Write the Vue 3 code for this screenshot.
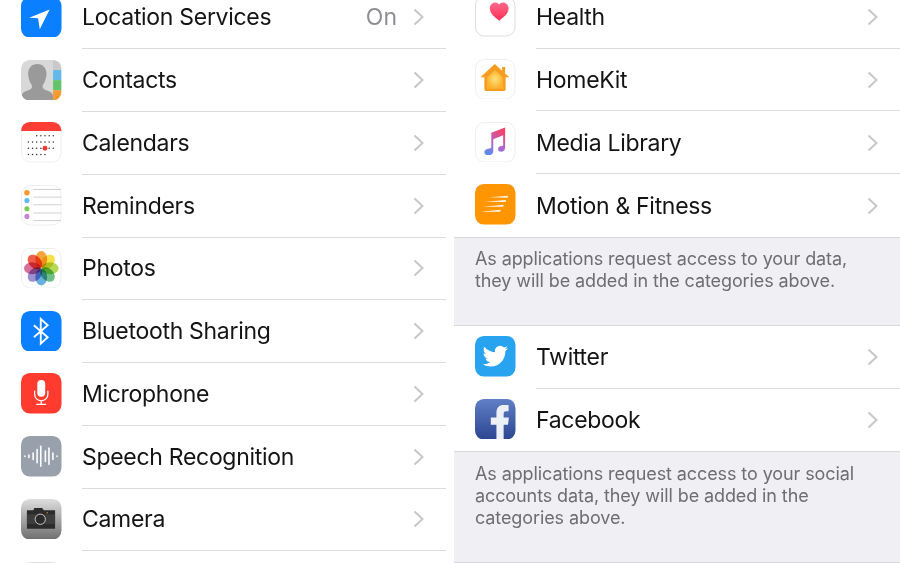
<script setup>
const leftRows = [
  { name: 'Location Services', icon: 'location', value: 'On' },
  { name: 'Contacts', icon: 'contacts' },
  { name: 'Calendars', icon: 'calendar' },
  { name: 'Reminders', icon: 'reminders' },
  { name: 'Photos', icon: 'photos' },
  { name: 'Bluetooth Sharing', icon: 'bluetooth' },
  { name: 'Microphone', icon: 'mic' },
  { name: 'Speech Recognition', icon: 'speech' },
  { name: 'Camera', icon: 'camera' },
  { name: '', icon: 'blank' },
]
const dataRows = [
  { name: 'Health', icon: 'health' },
  { name: 'HomeKit', icon: 'home' },
  { name: 'Media Library', icon: 'music' },
  { name: 'Motion & Fitness', icon: 'motion' },
]
const socialRows = [
  { name: 'Twitter', icon: 'twitter' },
  { name: 'Facebook', icon: 'facebook' },
]
const groups = [
  { rows: dataRows, note: ['As applications request access to your data,', 'they will be added in the categories above.'], noteClass: 'note-data' },
  { rows: socialRows, note: ['As applications request access to your social', 'accounts data, they will be added in the', 'categories above.'], noteClass: 'note-social' },
]
// calendar month grid: [first column, last column] per week
const calDots = []
const calLayout = [[2, 6], [0, 6], [0, 6], [0, 4]]
calLayout.forEach(([first, last], r) => {
  for (let c = first; c <= last; c++) calDots.push({ x: 7.5 + c * 4.2, y: 14 + r * 6.3 })
})
const petals = ['#f7a43c', '#f6e04a', '#b5d957', '#6cc087', '#68aee0', '#9c90d0', '#d8709f', '#ee5c4a']
const bars = [[4, 1], [8, 2], [12.3, 4], [16.3, 7.5], [20, 11], [24.7, 6], [28.3, 9], [32.3, 4], [36.5, 1]]
const tabs = ['#c9c9c9', '#62b9ea', '#62c46b', '#f59b2f']
</script>

<template>
  <div class="screen">
    <section class="panel panel-left">
      <div v-for="row in leftRows" :key="row.icon" class="row">
        <svg class="icon" viewBox="0 0 41 41">
          <template v-if="row.icon === 'location'">
            <rect width="41" height="41" rx="9" fill="#0a7fff" />
            <path d="M8.300 21 29 12.600 19 32.600 17.300 21.600Z" fill="#fff" />
          </template>
          <template v-else-if="row.icon === 'contacts'">
            <clipPath id="contacts-clip"><rect width="41" height="41" rx="9" /></clipPath>
            <g clip-path="url(#contacts-clip)">
              <rect width="41" height="41" fill="#d8d8d8" />
              <rect v-for="i in 4" :key="i" x="32.500" :y="(i - 1) * 10.200" width="8.500" height="10.200" :fill="tabs[i - 1]" />
              <path d="M0.500 41v-4c0-3 2-4.500 5.500-5.800 3.500-1.300 5.200-2.200 5.200-4.400 0-1.500-1-2.600-2-4.400-1-2-2-5.400-2-8.400C7.200 8 11 4 16.500 4s9.300 4 9.300 10c0 3-1 6.400-2 8.400-1 1.800-2 2.900-2 4.400 0 2.200 1.700 3.100 5.200 4.400 3.500 1.300 5.500 2.800 5.500 5.800v4Z" fill="#9a9a9a" />
            </g>
          </template>
          <template v-else-if="row.icon === 'calendar'">
            <rect x="0.500" y="0.500" width="40" height="40" rx="9" fill="#fff" stroke="#eeeeee" />
            <path d="M0 9a9 9 0 0 1 9-9h23a9 9 0 0 1 9 9H0Z" fill="#fb3d36" />
            <circle v-for="(dot, i) in calDots" :key="i" :cx="dot.x" :cy="dot.y" r="0.750" fill="#2d2d2d" />
            <circle cx="24.300" cy="26.600" r="2.500" fill="#f03a34" />
          </template>
          <template v-else-if="row.icon === 'reminders'">
            <rect x="0.500" y="0.500" width="40" height="40" rx="9" fill="#fff" stroke="#eeeeee" />
            <path d="M12.500 4.500h28M12.500 12.300h28M12.500 20h28M12.500 28.300h28M12.500 36h28" stroke="#c4c4c4" stroke-width="0.800" />
            <circle cx="6" cy="7.800" r="2.800" fill="#f79a2c" />
            <circle cx="6" cy="15.800" r="2.600" fill="#5fb8ee" />
            <circle cx="6" cy="24" r="2.600" fill="#7ccb50" />
            <circle cx="6" cy="31.800" r="2.600" fill="#c686d8" />
          </template>
          <template v-else-if="row.icon === 'photos'">
            <rect x="0.500" y="0.500" width="40" height="40" rx="9" fill="#fff" stroke="#eeeeee" />
            <ellipse
              v-for="(color, i) in petals"
              :key="i"
              class="petal"
              cx="20.500"
              cy="11.500"
              rx="6"
              ry="8.500"
              :fill="color"
              :transform="`rotate(${i * 45} 20.500 20.500)`"
            />
          </template>
          <template v-else-if="row.icon === 'bluetooth'">
            <rect width="41" height="41" rx="9" fill="#0a7fff" />
            <path d="M13 14.500 27 26.500 20 33V8L27 14.500 13 26.500" fill="none" stroke="#fff" stroke-width="1.900" />
          </template>
          <template v-else-if="row.icon === 'mic'">
            <rect width="41" height="41" rx="9" fill="#ff3b30" />
            <rect x="16.500" y="7" width="8" height="17" rx="4" fill="#fff" />
            <path d="M13.800 18v3.500a6.700 6.700 0 0 0 13.400 0V18M20.500 28.200v3.300M15.500 31.800h10" fill="none" stroke="#fff" stroke-width="1.300" />
          </template>
          <template v-else-if="row.icon === 'speech'">
            <rect width="41" height="41" rx="9" fill="#98a0ac" />
            <rect v-for="bar in bars" :key="bar[0]" :x="bar[0] - 0.800" :y="20.500 - bar[1]" width="1.600" :height="bar[1] * 2" rx="0.800" fill="#fff" />
          </template>
          <template v-else-if="row.icon === 'camera'">
            <defs>
              <linearGradient id="cam-bg" x1="0" y1="0" x2="0" y2="1">
                <stop offset="0" stop-color="#dedede" />
                <stop offset="1" stop-color="#6f6f6f" />
              </linearGradient>
            </defs>
            <rect width="41" height="41" rx="9" fill="url(#cam-bg)" />
            <path d="M6 11.500h6.500l1-2.500h8l1.500 2.500H34.500v18.500H6Z" fill="#2b2b2b" />
            <rect x="6" y="15.500" width="28.500" height="10" fill="#3d3d3d" />
            <circle cx="19.500" cy="20.500" r="5.200" fill="#2b2b2b" stroke="#d8d8d8" stroke-width="0.900" />
            <circle cx="26.500" cy="14" r="0.700" fill="#e8b64a" />
          </template>
          <template v-else-if="row.icon === 'blank'">
            <rect x="0.500" y="0.500" width="40" height="40" rx="9" fill="#fff" stroke="#dedede" />
          </template>
        </svg>
        <div class="row-body" :class="{ 'row-body-blank': !row.name }">
          <span class="row-name">{{ row.name }}</span>
          <span v-if="row.value" class="row-value">{{ row.value }}</span>
          <svg class="chevron" viewBox="0 0 12 18" :class="{ 'chevron-hide': !row.name }">
            <path d="M1.500 1.500 9.500 9l-8 7.500" fill="none" stroke="#c7c7cc" stroke-width="2" />
          </svg>
        </div>
      </div>
    </section>

    <section class="panel panel-right">
      <template v-for="group in groups" :key="group.noteClass">
        <div class="group">
          <div v-for="row in group.rows" :key="row.icon" class="row">
            <svg class="icon" viewBox="0 0 41 41">
              <template v-if="row.icon === 'health'">
                <defs>
                  <linearGradient id="heart-bg" x1="0" y1="0" x2="0" y2="1">
                    <stop offset="0" stop-color="#ff6a8a" />
                    <stop offset="1" stop-color="#ff2d55" />
                  </linearGradient>
                </defs>
                <rect x="0.500" y="0.500" width="40" height="40" rx="9" fill="#fff" stroke="#dcdcdc" />
                <path d="M24.500 25C20 21.500 15 18 15 12.500 15 9 17.500 6.500 20.500 6.500c1.700 0 3 .8 4 2.200 1-1.400 2.300-2.200 4-2.200 3 0 5.500 2.500 5.500 6 0 5.500-5 9-9.500 12.500Z" fill="url(#heart-bg)" />
              </template>
              <template v-else-if="row.icon === 'home'">
                <defs>
                  <radialGradient id="home-bg">
                    <stop offset="0" stop-color="#ffe27a" />
                    <stop offset="1" stop-color="#fdb02e" />
                  </radialGradient>
                </defs>
                <rect x="0.500" y="0.500" width="40" height="40" rx="9" fill="#fff" stroke="#eeeeee" />
                <path d="M5.500 18.500 20 5l7.500 7V8h3v7l4.500 3.500h-4v12a2 2 0 0 1-2 2H11.500a2 2 0 0 1-2-2v-12Z" fill="#f79c1e" />
                <path d="M12 19 20.300 11 28.500 19v11H12Z" fill="url(#home-bg)" />
              </template>
              <template v-else-if="row.icon === 'music'">
                <defs>
                  <linearGradient id="note-bg" x1="0.700" y1="0" x2="0.300" y2="1">
                    <stop offset="0" stop-color="#fb3f5f" />
                    <stop offset="0.550" stop-color="#b764c8" />
                    <stop offset="1" stop-color="#5a8cf0" />
                  </linearGradient>
                </defs>
                <rect x="0.500" y="0.500" width="40" height="40" rx="9" fill="#fff" stroke="#eeeeee" />
                <path d="M16.500 11 30.500 5.500V26c0 2.500-2 4-4.200 4-1.700 0-3-.9-3-2.500 0-1.900 1.700-2.800 3.400-3.100l1.800-.4V13.500L18.500 17.500V29.500c0 2.500-2.200 4-5 4-2.200 0-4-1-4-3 0-2 1.800-3 3.800-3.400l3.200-.7Z" fill="url(#note-bg)" />
              </template>
              <template v-else-if="row.icon === 'motion'">
                <rect width="41" height="41" rx="9" fill="#ff9500" />
                <path d="M14 13.500 33.500 12 33 14ZM10 18 31.500 16.200 31 18.200ZM7.500 23 29 21 28.500 23ZM5 28 26 26 25.500 28Z" fill="#fff" fill-opacity="0.900" />
              </template>
              <template v-else-if="row.icon === 'twitter'">
                <rect width="41" height="41" rx="9" fill="#27a3ef" />
                <path transform="translate(7.700 7.600) scale(1.070)" d="M23.953 4.570a10 10 0 0 1-2.825.775 4.958 4.958 0 0 0 2.163-2.723c-.951.555-2.005.959-3.127 1.184a4.920 4.920 0 0 0-8.384 4.482C7.690 8.095 4.067 6.130 1.640 3.162a4.822 4.822 0 0 0-.666 2.475c0 1.710.870 3.213 2.188 4.096a4.904 4.904 0 0 1-2.228-.616v.060a4.923 4.923 0 0 0 3.946 4.827 4.996 4.996 0 0 1-2.212.085 4.936 4.936 0 0 0 4.604 3.417 9.867 9.867 0 0 1-6.102 2.105c-.390 0-.779-.023-1.170-.067a13.995 13.995 0 0 0 7.557 2.209c9.053 0 13.998-7.496 13.998-13.985 0-.210 0-.420-.015-.630A9.935 9.935 0 0 0 24 4.590Z" fill="#fff" />
              </template>
              <template v-else-if="row.icon === 'facebook'">
                <defs>
                  <linearGradient id="fb-bg" x1="0" y1="0" x2="0" y2="1">
                    <stop offset="0" stop-color="#5f7fc6" />
                    <stop offset="1" stop-color="#2c4591" />
                  </linearGradient>
                </defs>
                <rect width="41" height="41" rx="9" fill="url(#fb-bg)" />
                <path d="M21.700 41V26h-5.700v-7.300h5.700v-4.700c0-5.300 2.800-8 7.300-8h5v6.500h-2.500c-1.800 0-2.500.8-2.500 2.500v3.700h5.300l-.9 7.300H29v15Z" fill="#eef0f7" />
              </template>
            </svg>
            <div class="row-body">
              <span class="row-name">{{ row.name }}</span>
              <svg class="chevron" viewBox="0 0 12 18">
                <path d="M1.500 1.500 9.500 9l-8 7.500" fill="none" stroke="#c7c7cc" stroke-width="2" />
              </svg>
            </div>
          </div>
        </div>
        <div class="note" :class="group.noteClass">
          <p v-for="line in group.note" :key="line">{{ line }}</p>
        </div>
      </template>
    </section>
  </div>
</template>

<style>
html,
body {
  margin: 0;
  background: #fff;
}
</style>

<style scoped>
.screen {
  width: 900px;
  height: 563px;
  display: flex;
  gap: 8px;
  overflow: hidden;
  background: #fff;
  font-family: Inter, "Liberation Sans", sans-serif;
}

.panel {
  width: 446px;
  flex: none;
}

.panel-left {
  margin-top: -13.5px;
}

.panel-right {
  margin-top: -14.25px;
}

.row {
  height: 62.75px;
  display: flex;
  align-items: center;
  gap: 20.5px;
  padding-left: 21px;
  box-sizing: border-box;
}

.icon {
  width: 40.5px;
  height: 40.5px;
  flex: none;
  display: block;
  margin-bottom: 1.5px;
}

.petal {
  mix-blend-mode: multiply;
}

.row-body {
  flex: 1;
  height: 100%;
  display: flex;
  align-items: center;
  box-sizing: border-box;
  border-bottom: 1px solid #dcdce0;
  padding-right: 21px;
}

.panel-right .row-body {
  padding-top: 1px;
}

.row-body-blank {
  border-bottom: 0;
}

.group .row:last-child .row-body {
  border-bottom: 0;
}

.row-name {
  flex: 1;
  font-size: 23px;
  color: #141414;
  letter-spacing: -0.3px;
}

.row-value {
  font-size: 23px;
  color: #8e8e93;
  margin-right: 16px;
}

.chevron {
  width: 12px;
  height: 18px;
  flex: none;
}

.chevron-hide {
  visibility: hidden;
}

.note {
  background: #efeff4;
  border-top: 1px solid #d8d8dc;
  border-bottom: 1px solid #d8d8dc;
  padding: 10.5px 21px 0;
  box-sizing: border-box;
  font-size: 18px;
  line-height: 22px;
  letter-spacing: -0.1px;
  color: #6d6d72;
}

.note p {
  margin: 0;
}

.note-data {
  height: 89px;
}

.note-social {
  height: 112px;
}
</style>
